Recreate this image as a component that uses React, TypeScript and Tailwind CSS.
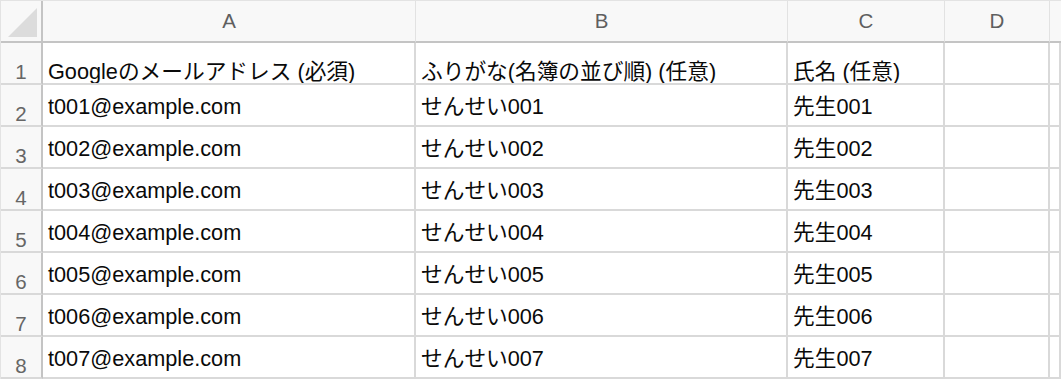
const font = { fontFamily: '"Liberation Sans", "Noto Sans CJK JP", Arial, sans-serif' };

const columns = [
  { label: "A", width: "w-[373px]" },
  { label: "B", width: "w-[372px]" },
  { label: "C", width: "w-[157px]" },
  { label: "D", width: "w-[105px]" },
  { label: "", width: "w-[11px]" },
];

const rows: string[][] = [
  ["Googleのメールアドレス (必須)", "ふりがな(名簿の並び順) (任意)", "氏名 (任意)"],
  ["t001@example.com", "せんせい001", "先生001"],
  ["t002@example.com", "せんせい002", "先生002"],
  ["t003@example.com", "せんせい003", "先生003"],
  ["t004@example.com", "せんせい004", "先生004"],
  ["t005@example.com", "せんせい005", "先生005"],
  ["t006@example.com", "せんせい006", "先生006"],
  ["t007@example.com", "せんせい007", "先生007"],
];

export default function App() {
  return (
    <div className="w-[1062px] h-[382px] bg-white overflow-hidden" style={font}>
      <div className="w-[1061px] border-l border-t border-[#e3e3e3]">
        {/* Column headers */}
        <div className="flex h-[42px]">
          <div className="w-[42px] shrink-0 bg-[#f8f8f8] border-r-2 border-b-2 border-[#c4c4c4] flex">
            <svg width="40" height="40" viewBox="0 0 40 40">
              <polygon points="7,36 36,36 36,7" fill="#dcdcdc" />
            </svg>
          </div>
          {columns.map((c, i) => (
            <div
              key={i}
              className={`${c.width} shrink-0 bg-[#f8f8f8] border-b-2 border-b-[#c4c4c4] ${
                i < 4 ? "border-r border-r-[#e2e2e2]" : ""
              } flex items-center justify-center text-[20.5px] leading-[22px] text-[#5f5f5f]`}
            >
              {c.label}
            </div>
          ))}
        </div>

        {/* Body */}
        {rows.map((r, ri) => (
          <div key={ri} className="flex h-[42px]">
            <div className="w-[42px] shrink-0 bg-[#f8f8f8] border-r-2 border-r-[#c4c4c4] border-b-2 border-b-[#d9d9d9] flex items-end justify-center pb-[1px] text-[20.5px] leading-[20px] text-[#666666]">
              {ri + 1}
            </div>
            {columns.map((c, ci) => (
              <div
                key={ci}
                className={`${c.width} shrink-0 border-r-2 border-b-2 border-[#d9d9d9] flex ${
                  ri === 0 ? "items-end" : "items-center pt-[3px]"
                } pl-[5px] text-[21.7px] leading-[22px] text-[#0a0a0a] whitespace-nowrap overflow-hidden`}
              >
                {r[ci] ?? ""}
              </div>
            ))}
          </div>
        ))}
      </div>
    </div>
  );
}
